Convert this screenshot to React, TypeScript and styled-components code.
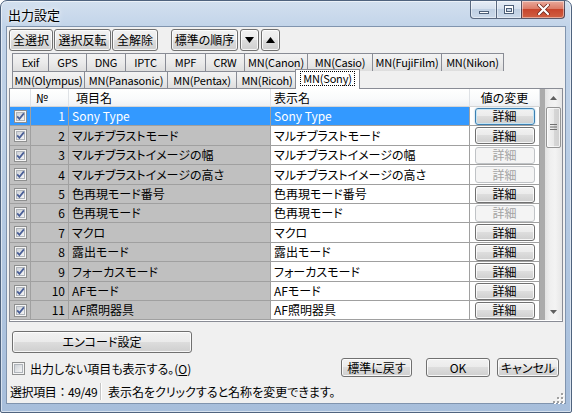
import React from 'react';
import styled, { createGlobalStyle, css } from 'styled-components';

const GlobalStyle = createGlobalStyle`
  html, body { margin: 0; padding: 0; background: #ffffff; }
  body {
    font-family: "Noto Sans CJK JP", "Noto Sans", sans-serif;
    font-size: 12px;
    color: #000;
    font-feature-settings: "palt";
  }
  * { box-sizing: border-box; }
`;

// --- window chrome ---

const Window = styled.div`
  width: 572px;
  height: 413px;
  display: flex;
  flex-direction: column;
  border: 1px solid #4f637e;
  border-radius: 7px 7px 2px 2px;
  background: linear-gradient(180deg, #d3e0ef 0px, #c2d4e9 26px, #b4c9e2 55%, #a7bedb 100%);
  box-shadow: inset 0 0 0 1px rgba(255, 255, 255, 0.55);
  overflow: hidden;
`;

const TitleBar = styled.div`
  height: 25px;
  flex-shrink: 0;
  display: flex;
  align-items: flex-start;
  padding: 0 6px 0 7px;
`;

const Title = styled.div`
  font-size: 13px;
  line-height: 13px;
  padding-top: 7px;
  text-shadow: 0 0 6px #fff, 0 0 3px #fff;
`;

const Caption = styled.div`
  margin-left: auto;
  display: flex;
  height: 18px;
`;

const CaptionButton = styled.div<{ $w: number; $close?: boolean; $first?: boolean }>`
  width: ${p => p.$w}px;
  height: 18px;
  display: flex;
  align-items: center;
  justify-content: center;
  border: 1px solid rgba(45, 62, 88, 0.75);
  border-top: none;
  margin-left: -1px;
  border-radius: ${p => (p.$first ? '0 0 0 4px' : p.$close ? '0 0 4px 0' : '0')};
  box-shadow: inset 0 0 0 1px rgba(255, 255, 255, 0.45);
  background: ${p =>
    p.$close
      ? 'linear-gradient(180deg, #e9a99b 0%, #dd7c68 45%, #c8452c 50%, #d06042 100%)'
      : 'linear-gradient(180deg, #e6edf6 0%, #d6e1ee 45%, #c0d0e3 50%, #cbd9ea 100%)'};
`;

const Client = styled.div`
  margin: 0 5px;
  height: 378px;
  border: 1px solid #8094ae;
  background: #f0f0f0;
  display: flex;
  flex-direction: column;
`;

// --- buttons ---

const buttonFace = css`
  border: 1px solid #707070;
  border-radius: 3px;
  background: linear-gradient(180deg, #f2f2f2 0%, #ebebeb 48%, #dddddd 50%, #cfcfcf 100%);
  box-shadow: inset 0 0 0 1px rgba(255, 255, 255, 0.8);
  font: inherit;
  color: #000;
  padding: 0;
  display: flex;
  align-items: center;
  justify-content: center;
  line-height: 1;
  white-space: nowrap;
`;

const PushButton = styled.button<{ $w: number; $h: number; $ml?: number }>`
  ${buttonFace};
  width: ${p => p.$w}px;
  height: ${p => p.$h}px;
  margin-left: ${p => p.$ml ?? 0}px;
  flex-shrink: 0;
`;

const DetailButton = styled.button<{ $disabled?: boolean; $focus?: boolean }>`
  ${buttonFace};
  width: 60px;
  height: 17px;
  ${p =>
    p.$focus &&
    css`
      border-color: #3c7fb1;
      box-shadow: inset 0 0 0 1px #c4e5f6, 0 0 2px rgba(60, 127, 177, 0.5);
    `}
  ${p =>
    p.$disabled &&
    css`
      border-color: #c0c3c6;
      background: #f4f4f4;
      box-shadow: none;
      color: #a3a3a3;
    `}
`;

// --- toolbar ---

const Toolbar = styled.div`
  display: flex;
  gap: 1px;
  padding: 2px 0 0 2px;
  height: 24px;
`;

// --- tabs ---

const TabArea = styled.div`
  margin-top: 2px;
  padding-left: 5px;
  display: flex;
  flex-direction: column;
`;

const TabRow = styled.div<{ $h: number }>`
  display: flex;
  height: ${p => p.$h}px;
`;

const Tab = styled.div<{ $w: number; $active?: boolean; $first?: boolean }>`
  position: relative;
  flex-shrink: 0;
  width: ${p => p.$w}px;
  height: 100%;
  margin-left: ${p => (p.$first ? 0 : -1)}px;
  border: 1px solid #898c95;
  border-bottom: none;
  background: linear-gradient(180deg, #f3f3f3 0%, #ebebeb 50%, #dedede 100%);
  display: flex;
  align-items: center;
  justify-content: center;
  font-size: 11px;
  letter-spacing: -0.2px;
  line-height: 1;
  white-space: nowrap;
  ${p =>
    p.$active &&
    css`
      z-index: 2;
      width: ${p.$w + 4}px;
      margin-left: -3px;
      margin-top: -2px;
      height: calc(100% + 3px);
      background: #ffffff;
      padding-bottom: 2px;
    `}
`;

const FocusText = styled.span`
  outline: 1px dotted #000;
  outline-offset: 1px;
  padding: 0 1px;
`;

const Panel = styled.div`
  margin: 0 2px;
  border: 1px solid #898c95;
  background: #ffffff;
  padding-bottom: 1px;
  display: flex;
`;

// --- data grid ---

const GridBody = styled.div`
  flex: 1;
  background: #ababab;
`;

const columns = '21px 38px 202px 199px 70px';

const HeaderRow = styled.div`
  display: grid;
  grid-template-columns: ${columns};
  height: 18px;
`;

const HeaderCell = styled.div<{ $pad?: number; $center?: boolean }>`
  background: linear-gradient(180deg, #ffffff 0%, #f9fafb 60%, #eef0f3 100%);
  border-right: 1px solid #dfe2e6;
  border-bottom: 1px solid #d5d5d5;
  display: flex;
  align-items: center;
  justify-content: ${p => (p.$center ? 'center' : 'flex-start')};
  padding-left: ${p => p.$pad ?? 0}px;
  white-space: nowrap;
`;

const Row = styled.div<{ $h: number }>`
  display: grid;
  grid-template-columns: ${columns};
  height: ${p => p.$h}px;
`;

type Tone = 'gray' | 'white' | 'sel';

const Cell = styled.div<{ $tone: Tone; $align?: 'left' | 'right' | 'center' }>`
  border-right: 1px solid #a0a0a0;
  border-bottom: 1px solid #a0a0a0;
  background: ${p => (p.$tone === 'sel' ? '#3399ff' : p.$tone === 'gray' ? '#c0c0c0' : '#ffffff')};
  color: ${p => (p.$tone === 'sel' ? '#ffffff' : '#000000')};
  display: flex;
  align-items: center;
  justify-content: ${p =>
    p.$align === 'right' ? 'flex-end' : p.$align === 'center' ? 'center' : 'flex-start'};
  padding: 0 3px;
  white-space: nowrap;
  overflow: hidden;
  line-height: 1;
`;

const ScrollBar = styled.div`
  width: 17px;
  display: flex;
  flex-direction: column;
  background: linear-gradient(90deg, #e2e2e2 0%, #efefef 30%, #f3f3f3 60%, #e6e6e6 100%);
`;

const ScrollArrow = styled.div`
  height: 17px;
  display: flex;
  align-items: center;
  justify-content: center;
`;

const Thumb = styled.div`
  margin: 1px 1px 0;
  height: 41px;
  border: 1px solid #959595;
  border-radius: 2px;
  background: linear-gradient(90deg, #f4f4f4 0%, #e9e9e9 50%, #d7d7d7 51%, #d0d0d0 100%);
  box-shadow: inset 0 0 0 1px rgba(255, 255, 255, 0.7);
  display: flex;
  align-items: center;
  justify-content: center;
`;

const Track = styled.div`
  flex: 1;
`;

// --- footer ---

const Footer = styled.div`
  display: flex;
  align-items: flex-end;
  padding: 0 6px 0 5px;
  margin-top: 9px;
`;

const FooterLeft = styled.div`
  display: flex;
  flex-direction: column;
`;

const CheckRow = styled.label`
  margin-top: 7px;
  height: 16px;
  display: flex;
  align-items: center;
  gap: 5px;
  white-space: nowrap;
`;

const FooterRight = styled.div`
  margin-left: auto;
  display: flex;
  margin-bottom: -1px;
`;

const StatusBar = styled.div`
  margin-top: auto;
  height: 23px;
  display: flex;
  align-items: center;
  background: #f0f0f0;
  padding-left: 3px;
`;

const StatusPanel = styled.div<{ $w?: number }>`
  width: ${p => (p.$w ? `${p.$w}px` : 'auto')};
  padding-left: ${p => (p.$w ? 0 : 6)}px;
  white-space: nowrap;
  line-height: 1;
  ${p =>
    p.$w &&
    css`
      font-feature-settings: normal;
      letter-spacing: -0.4px;
    `}
`;

const StatusSep = styled.div`
  width: 2px;
  height: 17px;
  border-left: 1px solid #c5c5c5;
  border-right: 1px solid #ffffff;
`;

const Grip = styled.div`
  margin-left: auto;
  align-self: flex-end;
  width: 12px;
  height: 12px;
  margin-right: 1px;
  margin-bottom: 1px;
`;

// --- icons ---

const CheckBox = ({ checked = true }: { checked?: boolean }) => (
  <svg width="13" height="13" viewBox="0 0 13 13">
    <defs>
      <linearGradient id="cbInner" x1="0" y1="0" x2="1" y2="1">
        <stop offset="0" stopColor="#cbcfd5" />
        <stop offset="1" stopColor="#f7f7f7" />
      </linearGradient>
    </defs>
    <rect x="0.5" y="0.5" width="12" height="12" fill="#f5f5f5" stroke="#8e8f8f" />
    <rect x="2.5" y="2.5" width="8" height="8" fill="url(#cbInner)" stroke="#b0b5bb" />
    {checked && (
      <path d="M3.2 6.4 L5.4 8.9 L9.9 3.4" fill="none" stroke="#4a5f97" strokeWidth="1.7" />
    )}
  </svg>
);

const Triangle = ({ up, color = '#000', w = 9, h = 6 }: { up?: boolean; color?: string; w?: number; h?: number }) => (
  <svg width={w} height={h} viewBox={`0 0 ${w} ${h}`}>
    <path d={up ? `M0 ${h} L${w / 2} 0 L${w} ${h} Z` : `M0 0 L${w} 0 L${w / 2} ${h} Z`} fill={color} />
  </svg>
);

const GripLines = () => (
  <svg width="7" height="7" viewBox="0 0 7 7">
    {[0.5, 3, 5.5].map(y => (
      <line key={y} x1="0" y1={y} x2="7" y2={y} stroke="#6f6f6f" strokeWidth="1" />
    ))}
  </svg>
);

const SizeGrip = () => (
  <svg width="12" height="12" viewBox="0 0 12 12">
    {[
      [9, 1], [9, 5], [5, 5], [9, 9], [5, 9], [1, 9],
    ].map(([x, y]) => (
      <g key={`${x}-${y}`}>
        <rect x={x + 1} y={y + 1} width="2" height="2" fill="#ffffff" />
        <rect x={x} y={y} width="2" height="2" fill="#a0a0a0" />
      </g>
    ))}
  </svg>
);

// --- data ---

const tabsTop = [
  { label: 'Exif', w: 37 },
  { label: 'GPS', w: 39 },
  { label: 'DNG', w: 40 },
  { label: 'IPTC', w: 41 },
  { label: 'MPF', w: 41 },
  { label: 'CRW', w: 40 },
  { label: 'MN(Canon)', w: 64 },
  { label: 'MN(Casio)', w: 66 },
  { label: 'MN(FujiFilm)', w: 70 },
  { label: 'MN(Nikon)', w: 63 },
];

const tabsBottom = [
  { label: 'MN(Olympus)', w: 73 },
  { label: 'MN(Panasonic)', w: 84 },
  { label: 'MN(Pentax)', w: 70 },
  { label: 'MN(Ricoh)', w: 62 },
  { label: 'MN(Sony)', w: 61, active: true },
];

const items = [
  'Sony Type',
  'マルチブラストモード',
  'マルチブラストイメージの幅',
  'マルチブラストイメージの高さ',
  '色再現モード番号',
  '色再現モード',
  'マクロ',
  '露出モード',
  'フォーカスモード',
  'AFモード',
  'AF照明器具',
];

const disabledRows = new Set([3, 4, 6]);

export default function App() {
  return (
    <>
      <GlobalStyle />
      <Window>
        <TitleBar>
          <Title>出力設定</Title>
          <Caption>
            <CaptionButton $w={27} $first>
              <svg width="10" height="10" viewBox="0 0 10 10">
                <rect x="0.5" y="6.5" width="9" height="2" fill="#ffffff" stroke="#4d5f78" />
              </svg>
            </CaptionButton>
            <CaptionButton $w={26}>
              <svg width="10" height="9" viewBox="0 0 10 9">
                <rect x="0.5" y="0.5" width="9" height="8" fill="#ffffff" stroke="#4d5f78" />
                <rect x="2.5" y="3.5" width="5" height="3" fill="#c9d6e6" stroke="#4d5f78" />
              </svg>
            </CaptionButton>
            <CaptionButton $w={44} $close>
              <svg width="13" height="11" viewBox="0 0 13 11">
                <path d="M2 1 L11 10 M11 1 L2 10" stroke="#6b2418" strokeWidth="3.6" strokeLinecap="round" />
                <path d="M2 1 L11 10 M11 1 L2 10" stroke="#ffffff" strokeWidth="2.2" strokeLinecap="round" />
              </svg>
            </CaptionButton>
          </Caption>
        </TitleBar>

        <Client>
          <Toolbar>
            <PushButton $w={44} $h={22}>全選択</PushButton>
            <PushButton $w={57} $h={22}>選択反転</PushButton>
            <PushButton $w={46} $h={22}>全解除</PushButton>
            <PushButton $w={67} $h={22} $ml={12}>標準の順序</PushButton>
            <PushButton $w={19} $h={22} $ml={1}>
              <Triangle />
            </PushButton>
            <PushButton $w={19} $h={22} $ml={1}>
              <Triangle up />
            </PushButton>
          </Toolbar>

          <TabArea>
            <TabRow $h={18}>
              {tabsTop.map((t, i) => (
                <Tab key={t.label} $w={t.w} $first={i === 0}>
                  {t.label}
                </Tab>
              ))}
            </TabRow>
            <TabRow $h={17}>
              {tabsBottom.map((t, i) => (
                <Tab key={t.label} $w={t.w} $first={i === 0} $active={t.active}>
                  {t.active ? <FocusText>{t.label}</FocusText> : t.label}
                </Tab>
              ))}
            </TabRow>
          </TabArea>

          <Panel>
            <GridBody>
              <HeaderRow>
                <HeaderCell />
                <HeaderCell $pad={5}>№</HeaderCell>
                <HeaderCell $pad={7}>項目名</HeaderCell>
                <HeaderCell $pad={3}>表示名</HeaderCell>
                <HeaderCell $center>値の変更</HeaderCell>
              </HeaderRow>
              {items.map((name, i) => {
                const no = i + 1;
                const h = Math.round(19.4 * (i + 1)) - Math.round(19.4 * i);
                const sel = no === 1;
                const left: Tone = sel ? 'sel' : 'gray';
                return (
                  <Row key={no} $h={h}>
                    <Cell $tone={left} $align="center">
                      <CheckBox />
                    </Cell>
                    <Cell $tone={left} $align="right">{no}</Cell>
                    <Cell $tone={left}>{name}</Cell>
                    <Cell $tone={sel ? 'sel' : 'white'}>{name}</Cell>
                    <Cell $tone="white" $align="center">
                      <DetailButton $disabled={disabledRows.has(no)} $focus={sel}>
                        詳細
                      </DetailButton>
                    </Cell>
                  </Row>
                );
              })}
            </GridBody>
            <ScrollBar>
              <ScrollArrow>
                <Triangle up w={7} h={4} color="#5f5f5f" />
              </ScrollArrow>
              <Thumb>
                <GripLines />
              </Thumb>
              <Track />
              <ScrollArrow>
                <Triangle w={7} h={4} color="#5f5f5f" />
              </ScrollArrow>
            </ScrollBar>
          </Panel>

          <Footer>
            <FooterLeft>
              <PushButton $w={180} $h={22}>エンコード設定</PushButton>
              <CheckRow>
                <CheckBox checked={false} />
                <span>
                  出力しない項目も表示する。(<u>O</u>)
                </span>
              </CheckRow>
            </FooterLeft>
            <FooterRight>
              <PushButton $w={71} $h={19}>標準に戻す</PushButton>
              <PushButton $w={64} $h={19} $ml={14}>OK</PushButton>
              <PushButton $w={62} $h={19} $ml={7}>キャンセル</PushButton>
            </FooterRight>
          </Footer>

          <StatusBar>
            <StatusPanel $w={90}>選択項目：49/49</StatusPanel>
            <StatusSep />
            <StatusPanel>表示名をクリックすると名称を変更できます。</StatusPanel>
            <Grip>
              <SizeGrip />
            </Grip>
          </StatusBar>
        </Client>
      </Window>
    </>
  );
}
